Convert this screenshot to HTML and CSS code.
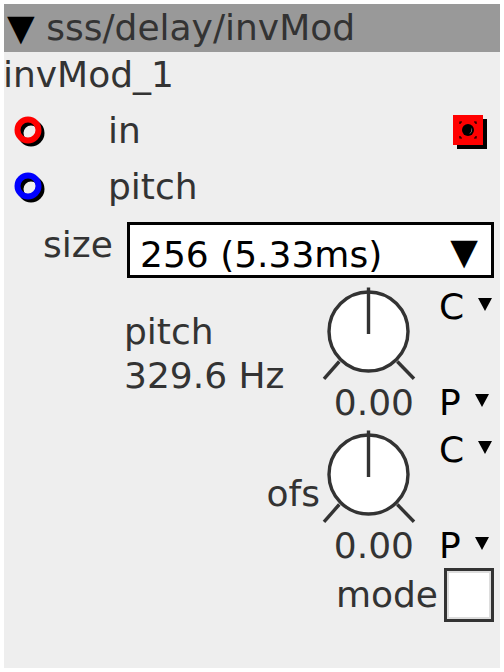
FILE: index.html
```html
<!DOCTYPE html>
<html>
<head>
<meta charset="utf-8">
<link rel="stylesheet" href="styles.css">
</head>
<body>
<div class="panel">
  <div class="header"><span class="tri">▼</span> sss/delay/invMod</div>
  <div class="name">invMod_1</div>

  <div class="port-row">
    <svg class="ring" width="40" height="40" viewBox="0 0 40 40">
      <circle cx="23" cy="23" r="10.5" fill="none" stroke="#000" stroke-width="6"/>
      <circle cx="20" cy="20" r="10.5" fill="none" stroke="#ff0000" stroke-width="6"/>
    </svg>
    <span class="port-label">in</span>
    <svg class="outport" width="44" height="44" viewBox="0 0 44 44">
      <rect x="7" y="8" width="30" height="30" fill="#000"/>
      <rect x="3" y="4" width="30" height="30" fill="#ff0000"/>
      <path d="M10 13 V11 H12 M24 11 H26 V13 M26 25 V27 H24 M12 27 H10 V25" fill="none" stroke="#000" stroke-width="1.2"/>
      <circle cx="18" cy="19" r="6" fill="#000"/>
      <path d="M21.5 16.5 A4.5 4.5 0 0 1 19 23 A6 6 0 0 0 21.5 16.5 Z" fill="#fff"/>
    </svg>
  </div>

  <div class="port-row">
    <svg class="ring" width="40" height="40" viewBox="0 0 40 40">
      <circle cx="23" cy="23" r="10.5" fill="none" stroke="#000" stroke-width="6"/>
      <circle cx="20" cy="20" r="10.5" fill="none" stroke="#0000ff" stroke-width="6"/>
    </svg>
    <span class="port-label">pitch</span>
  </div>

  <div class="size-row">
    <span class="size-label">size</span>
    <div class="dropdown">
      <span class="dd-value">256 (5.33ms)</span>
      <span class="dd-arrow">▼</span>
    </div>
  </div>

  <div class="param">
    <div class="param-label">
      <div>pitch</div>
      <div>329.6 Hz</div>
    </div>
    <div class="knob-col">
      <svg class="knob" width="96" height="96" viewBox="0 0 96 96">
        <circle cx="46.5" cy="45.5" r="39.5" fill="#fff" stroke="#333" stroke-width="3.4"/>
        <line x1="46.5" y1="1.5" x2="46.5" y2="48" stroke="#333" stroke-width="3.4"/>
        <line x1="2" y1="92.8" x2="17.3" y2="75.5" stroke="#333" stroke-width="3.4"/>
        <line x1="75.3" y1="75.5" x2="92" y2="92.8" stroke="#333" stroke-width="3.4"/>
      </svg>
      <div class="knob-value">0.00</div>
    </div>
    <div class="cp-col">
      <div class="cp">C<span class="small-tri"></span></div>
      <div class="cp">P<span class="small-tri"></span></div>
    </div>
  </div>

  <div class="param param-2">
    <div class="param-label label-right">
      <div>ofs</div>
    </div>
    <div class="knob-col">
      <svg class="knob" width="96" height="96" viewBox="0 0 96 96">
        <circle cx="46.5" cy="45.5" r="39.5" fill="#fff" stroke="#333" stroke-width="3.4"/>
        <line x1="46.5" y1="1.5" x2="46.5" y2="48" stroke="#333" stroke-width="3.4"/>
        <line x1="2" y1="92.8" x2="17.3" y2="75.5" stroke="#333" stroke-width="3.4"/>
        <line x1="75.3" y1="75.5" x2="92" y2="92.8" stroke="#333" stroke-width="3.4"/>
      </svg>
      <div class="knob-value">0.00</div>
    </div>
    <div class="cp-col">
      <div class="cp">C<span class="small-tri"></span></div>
      <div class="cp">P<span class="small-tri"></span></div>
    </div>
  </div>

  <div class="mode-row">
    <span class="mode-label">mode</span>
    <div class="checkbox"></div>
  </div>
</div>
</body>
</html>
```

FILE: styles.css
```css
html, body {
  margin: 0;
  padding: 0;
  background: #ffffff;
}

body {
  font-family: "DejaVu Sans", "Verdana", sans-serif;
  font-size: 36px;
  color: #333333;
}

.panel {
  margin: 4px;
  width: 496px;
  height: 664px;
  background: #eeeeee;
  overflow: hidden;
}

.header {
  height: 48px;
  line-height: 48px;
  background: #999999;
  padding-left: 3px;
  white-space: nowrap;
  color: #333333;
}

.tri {
  color: #000000;
}

.name {
  height: 45px;
  line-height: 45px;
  margin-left: -1px;
}

.port-row {
  display: flex;
  align-items: flex-start;
  height: 56px;
  padding-top: 13px;
  box-sizing: border-box;
}

.ring {
  margin-left: 4px;
  flex: none;
}

.port-label {
  margin-left: 60px;
  line-height: 42px;
}

.outport {
  margin-left: auto;
  margin-right: 6px;
  margin-top: 1px;
  flex: none;
}

.size-row {
  display: flex;
  align-items: flex-start;
  margin-top: 13px;
  padding-left: 39px;
  padding-right: 6px;
}

.size-label {
  line-height: 42px;
  margin-top: 2px;
  width: 84px;
  flex: none;
}

.dropdown {
  flex: 1;
  height: 56px;
  box-sizing: border-box;
  border: 3px solid #000000;
  background: #ffffff;
  color: #000000;
  display: flex;
  justify-content: space-between;
  align-items: flex-start;
  padding: 10px 13px 0 10px;
}

.dd-value {
  line-height: 40px;
}

.dd-arrow {
  line-height: 40px;
  margin-top: -3px;
}

.param {
  display: flex;
  margin-top: 7.5px;
  height: 143px;
}

.param-2 {
  margin-top: 0;
  height: 139.5px;
}

.param-label {
  flex: 1;
  padding-left: 120px;
  padding-top: 24px;
  line-height: 44px;
  white-space: nowrap;
}

.label-right {
  padding-left: 0;
  padding-top: 43px;
  padding-right: 2px;
  text-align: right;
}

.knob-col {
  width: 96px;
  flex: none;
  display: flex;
  flex-direction: column;
}

.knob {
  display: block;
}

.knob-value {
  line-height: 42px;
  text-align: right;
  padding-right: 4px;
}

.cp-col {
  width: 82px;
  flex: none;
  box-sizing: border-box;
  padding-left: 21px;
  display: flex;
  flex-direction: column;
  justify-content: space-between;
  height: 138px;
  color: #000000;
}

.cp {
  line-height: 42px;
  white-space: nowrap;
}

.small-tri {
  display: inline-block;
  width: 0;
  height: 0;
  border-left: 7px solid transparent;
  border-right: 7px solid transparent;
  border-top: 13px solid #000000;
  margin-left: 14px;
  vertical-align: top;
  margin-top: 12px;
}

.mode-row {
  display: flex;
  justify-content: flex-end;
  align-items: flex-start;
  padding-right: 6px;
}

.mode-label {
  line-height: 54px;
  margin-right: 6px;
}

.checkbox {
  width: 50px;
  height: 54px;
  box-sizing: border-box;
  border: 3px solid #333333;
  background: #ffffff;
  box-shadow: inset 0 0 0 2px #dddddd;
}
```
